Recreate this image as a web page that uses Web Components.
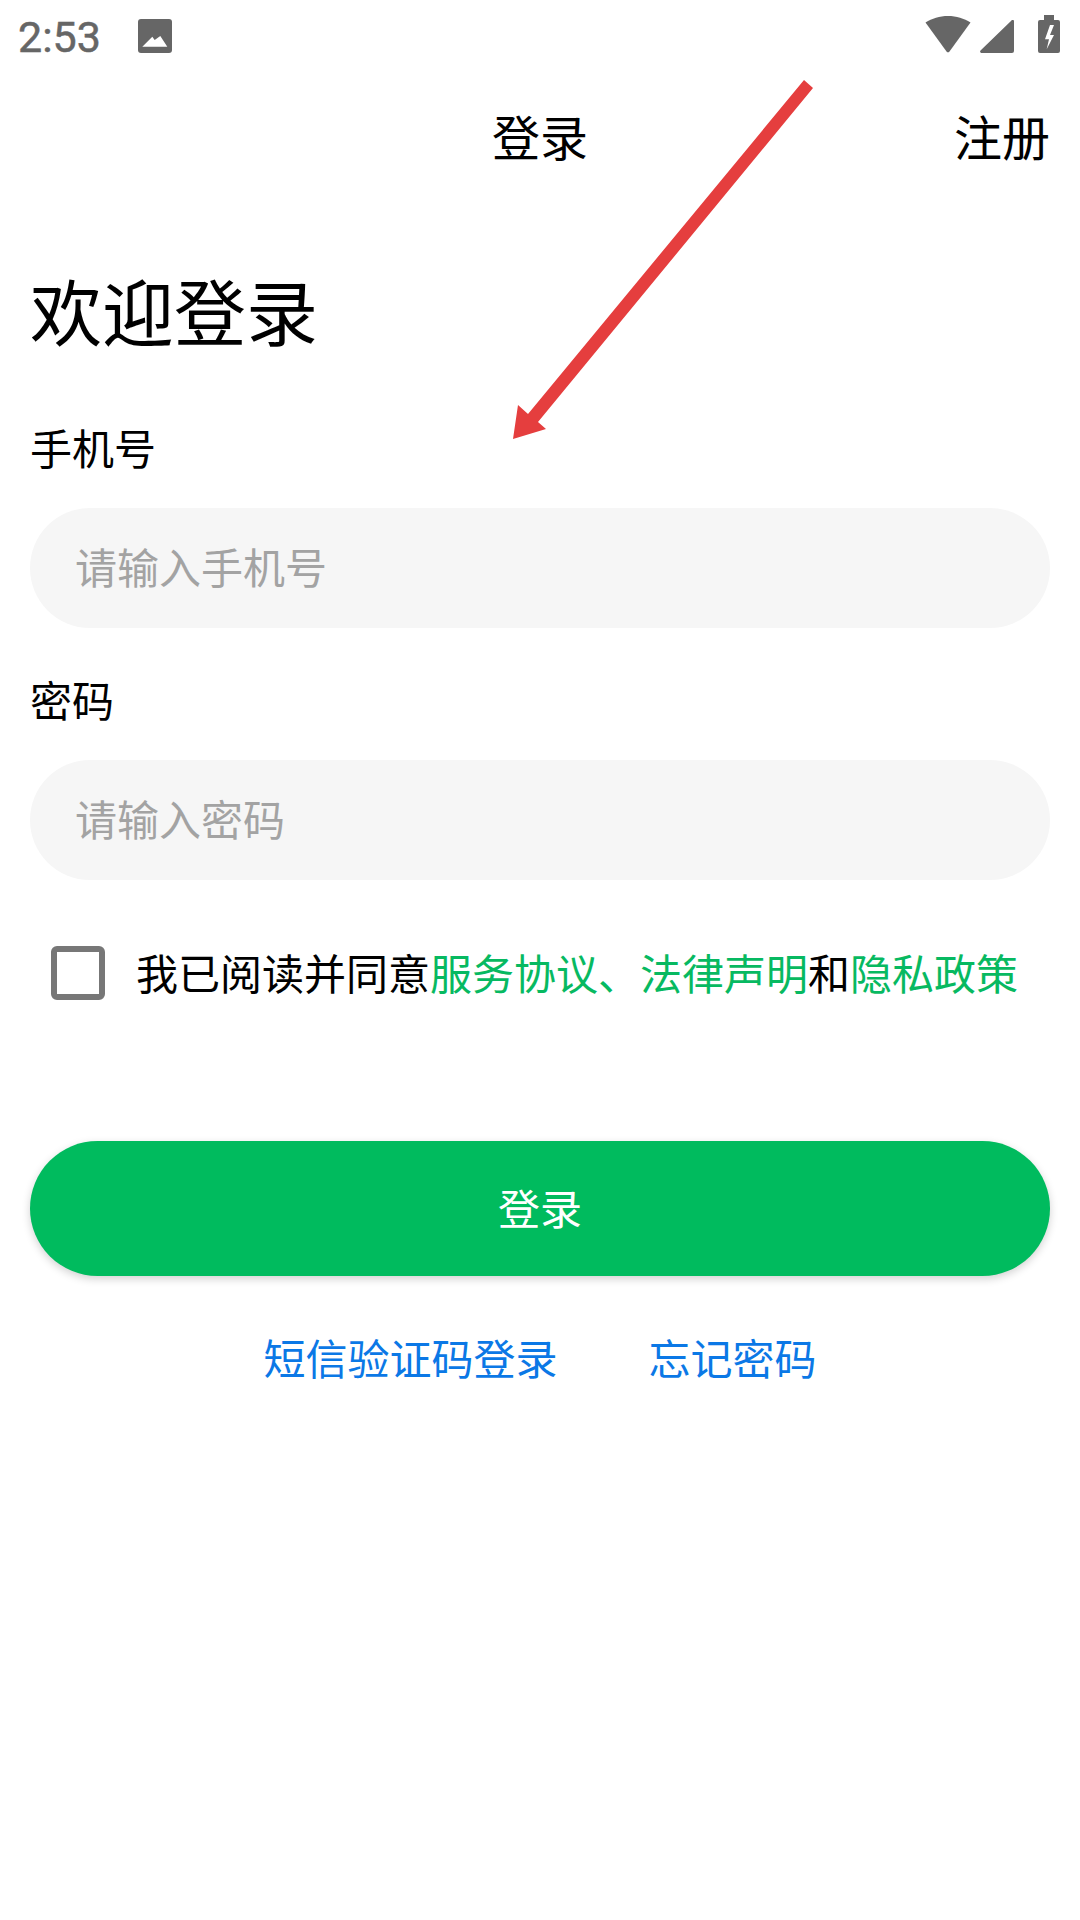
<!DOCTYPE html>
<html lang="zh">
<head>
<meta charset="utf-8">
<style>
    html, body { margin: 0; padding: 0; background: #fff; }
    body {
        width: 1080px;
        height: 1920px;
        position: relative;
        overflow: hidden;
        font-family: "Noto Sans CJK SC", "Liberation Sans", sans-serif;
    }
</style>
</head>
<body>
<login-page></login-page>
<script>
class StatusBar extends HTMLElement {
    constructor() {
        super();
        this.attachShadow({ mode: 'open' });
    }
    connectedCallback() {
        this.shadowRoot.innerHTML = `
            <style>
                :host { display: flex; align-items: center; height: 72px; padding: 0 20px 0 18px; color: #666; }
                .time { font: 43px/72px Roboto, sans-serif; width: 120px; padding-top: 2px; -webkit-text-stroke: 0.5px #666; }
                .right { margin-left: auto; margin-bottom: 4px; display: flex; align-items: flex-end; gap: 9px; }
                svg { display: block; fill: #666; }
            </style>
            <span class="time">2:53</span>
            <svg width="34" height="34" viewBox="0 0 34 34">
                <path d="M3 0h28a3 3 0 0 1 3 3v28a3 3 0 0 1-3 3H3a3 3 0 0 1-3-3V3a3 3 0 0 1 3-3z"/>
                <path fill="#fff" d="M4.300 27.700 14.300 17.700 16.700 21 22.300 17 29.300 27.700z"/>
            </svg>
            <div class="right">
                <svg width="46" height="37" viewBox="0 0 46 37"><path d="M.5 6.500C7 2.500 14.500 0 23 0s16 2.500 22.500 6.500L24.500 35.500a2 2 0 0 1-3 0z"/></svg>
                <svg width="34" height="33" viewBox="0 0 34 33"><path d="M33 0a1 1 0 0 1 1 1v30a2 2 0 0 1-2 2H1.500A1.500 1.500 0 0 1 .5 30.500L31 1a2 2 0 0 1 2-1z"/></svg>
                <svg width="22" height="38" viewBox="0 0 22 38" style="margin-left:15px">
                    <path d="M6 0h10v5h4a2 2 0 0 1 2 2v29a2 2 0 0 1-2 2H2a2 2 0 0 1-2-2V7a2 2 0 0 1 2-2h4z"/>
                    <path fill="#fff" d="M12 10 7 24.300h4L8.700 34.300 16 20h-4l4-10z"/>
                </svg>
            </div>
        `;
    }
}
customElements.define('status-bar', StatusBar);

class TopNav extends HTMLElement {
    constructor() {
        super();
        this.attachShadow({ mode: 'open' });
    }
    connectedCallback() {
        this.shadowRoot.innerHTML = `
            <style>
                :host { display: grid; grid-template-columns: 1fr auto 1fr; align-items: center; height: 126px; padding: 0 30px; color: #000; font-size: 48px; line-height: 126px; }
                .reg { justify-self: end; }
            </style>
            <span></span>
            <span>登录</span>
            <span class="reg">注册</span>
        `;
    }
}
customElements.define('top-nav', TopNav);

class FormField extends HTMLElement {
    constructor() {
        super();
        this.attachShadow({ mode: 'open' });
    }
    connectedCallback() {
        this.shadowRoot.innerHTML = `
            <style>
                :host { display: block; }
                .label { font-size: 42px; line-height: 60px; color: #000; margin-bottom: 31px; }
                .box { height: 120px; border-radius: 60px; background: #f6f6f6; padding-left: 45px; font-size: 42px; line-height: 116px; color: #a3a3a3; }
            </style>
            <div class="label">${this.getAttribute('label')}</div>
            <div class="box">${this.getAttribute('placeholder')}</div>
        `;
    }
}
customElements.define('form-field', FormField);

class AgreeRow extends HTMLElement {
    constructor() {
        super();
        this.attachShadow({ mode: 'open' });
    }
    connectedCallback() {
        this.shadowRoot.innerHTML = `
            <style>
                :host { display: flex; align-items: center; gap: 31px; padding-left: 21px; font-size: 42px; line-height: 60px; color: #000; white-space: nowrap; }
                .check { width: 54px; height: 54px; box-sizing: border-box; border: 6px solid #777; border-radius: 6px; }
                .text { margin-bottom: 2px; }
                .g { color: #07b961; }
            </style>
            <div class="check"></div>
            <div class="text">我已阅读并同意<span class="g">服务协议、法律声明</span>和<span class="g">隐私政策</span></div>
        `;
    }
}
customElements.define('agree-row', AgreeRow);

class LoginPage extends HTMLElement {
    constructor() {
        super();
        this.attachShadow({ mode: 'open' });
    }
    connectedCallback() {
        this.shadowRoot.innerHTML = `
            <style>
                :host { display: block; }
                main { display: flex; flex-direction: column; padding: 0 30px; }
                h1 { margin: 61px 0 0; font-size: 72px; line-height: 100px; font-weight: 400; color: #000; }
                form-field.first { margin-top: 58px; }
                form-field.second { margin-top: 41px; }
                agree-row { margin-top: 62px; }
                .btn { margin-top: 137px; height: 135px; border-radius: 68px; background: #00bb5e; color: #fff; font-size: 42px; line-height: 131px; text-align: center; box-shadow: 0 3px 8px rgba(0,0,0,.18); }
                .links { display: flex; justify-content: center; gap: 91px; margin-top: 51px; font-size: 42px; line-height: 60px; color: #0b78e6; }
                .arrow { position: absolute; left: 500px; top: 70px; }
            </style>
            <status-bar></status-bar>
            <top-nav></top-nav>
            <main>
                <h1>欢迎登录</h1>
                <form-field class="first" label="手机号" placeholder="请输入手机号"></form-field>
                <form-field class="second" label="密码" placeholder="请输入密码"></form-field>
                <agree-row></agree-row>
                <div class="btn">登录</div>
                <div class="links"><span>短信验证码登录</span><span>忘记密码</span></div>
            </main>
            <svg class="arrow" width="320" height="380" viewBox="0 0 320 380">
                <path fill="#e53e3e" d="M304 10 313 18 38 352 46 359 13 369 18 335 28 344z"/>
            </svg>
        `;
    }
}
customElements.define('login-page', LoginPage);
</script>
</body>
</html>
